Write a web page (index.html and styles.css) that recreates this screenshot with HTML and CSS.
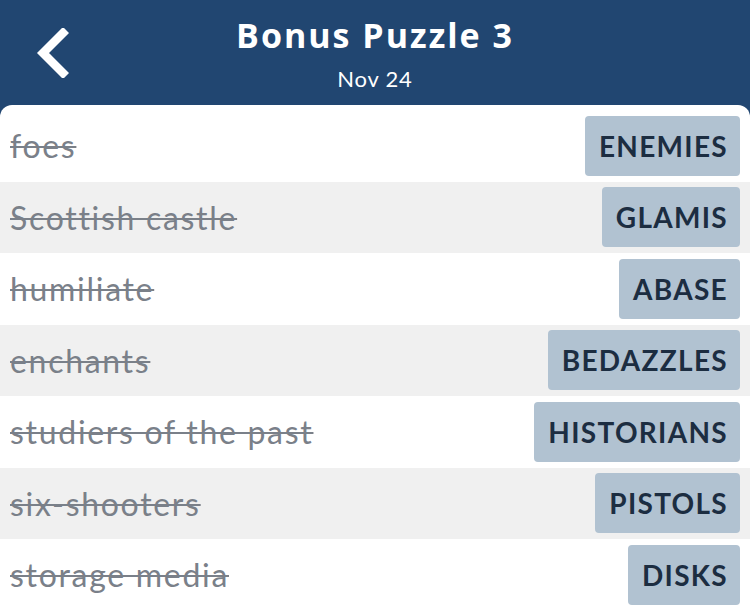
FILE: index.html
```html
<!DOCTYPE html>
<html lang="en">
<head>
    <meta charset="UTF-8">
    <meta name="viewport" content="width=device-width, initial-scale=1.0">
    <title>Bonus Puzzle 3</title>
    <link rel="stylesheet" href="styles.css">
</head>
<body>
    <!-- Header -->
    <header class="top-bar">
        <button class="back-button" aria-label="Back">
            <svg width="36" height="50" viewBox="0 0 36 50">
                <path d="M30 5 L10 25 L30 45" fill="none" stroke="#ffffff" stroke-width="8.5" stroke-linecap="square" stroke-linejoin="miter"/>
            </svg>
        </button>
        <div class="title-block">
            <h1>Bonus Puzzle 3</h1>
            <p class="subtitle">Nov 24</p>
        </div>
    </header>

    <!-- Solved clues -->
    <main class="clue-card">
        <div class="clue-row">
            <span class="clue">foes</span>
            <span class="answer">ENEMIES</span>
        </div>
        <div class="clue-row">
            <span class="clue">Scottish castle</span>
            <span class="answer">GLAMIS</span>
        </div>
        <div class="clue-row">
            <span class="clue">humiliate</span>
            <span class="answer">ABASE</span>
        </div>
        <div class="clue-row">
            <span class="clue">enchants</span>
            <span class="answer">BEDAZZLES</span>
        </div>
        <div class="clue-row">
            <span class="clue">studiers of the past</span>
            <span class="answer">HISTORIANS</span>
        </div>
        <div class="clue-row">
            <span class="clue">six-shooters</span>
            <span class="answer">PISTOLS</span>
        </div>
        <div class="clue-row">
            <span class="clue">storage media</span>
            <span class="answer">DISKS</span>
        </div>
    </main>
</body>
</html>
```

FILE: styles.css
```css
/* General Styling */
body {
    font-family: Lato, "Noto Sans", sans-serif;
    margin: 0;
    padding: 0;
    background-color: #214671;
    overflow: hidden;
}

/* Header */
.top-bar {
    position: relative;
    height: 105px;
    display: flex;
    justify-content: center;
}

.back-button {
    position: absolute;
    top: 28px;
    left: 33px;
    background: transparent;
    border: none;
    padding: 0;
    cursor: pointer;
}

.title-block {
    text-align: center;
    color: #ffffff;
}

.title-block h1 {
    margin: 13px 0 0;
    font-family: "Open Sans", Lato, sans-serif;
    font-size: 34px;
    font-weight: 700;
    letter-spacing: 2px;
    line-height: 44px;
}

.subtitle {
    margin: 8px 0 0;
    font-size: 22px;
    letter-spacing: 0.8px;
    line-height: 28px;
}

/* Clue list */
.clue-card {
    background-color: #ffffff;
    border-radius: 12px 12px 0 0;
    padding-top: 5px;
}

.clue-row {
    height: 71.5px;
    display: flex;
    align-items: center;
    justify-content: space-between;
    padding: 0 10px;
}

.clue-row:nth-child(even) {
    background-color: #f0f0f0;
}

.clue {
    font-size: 32px;
    letter-spacing: 1.7px;
    color: #7a8089;
    text-decoration: line-through;
    text-decoration-thickness: 2px;
}

.answer {
    height: 60px;
    display: flex;
    align-items: center;
    padding: 0 12px 0 14px;
    background-color: #b1c2d1;
    border-radius: 4px;
    font-size: 28px;
    font-weight: 700;
    letter-spacing: 1.3px;
    color: #1c2d41;
}
```
